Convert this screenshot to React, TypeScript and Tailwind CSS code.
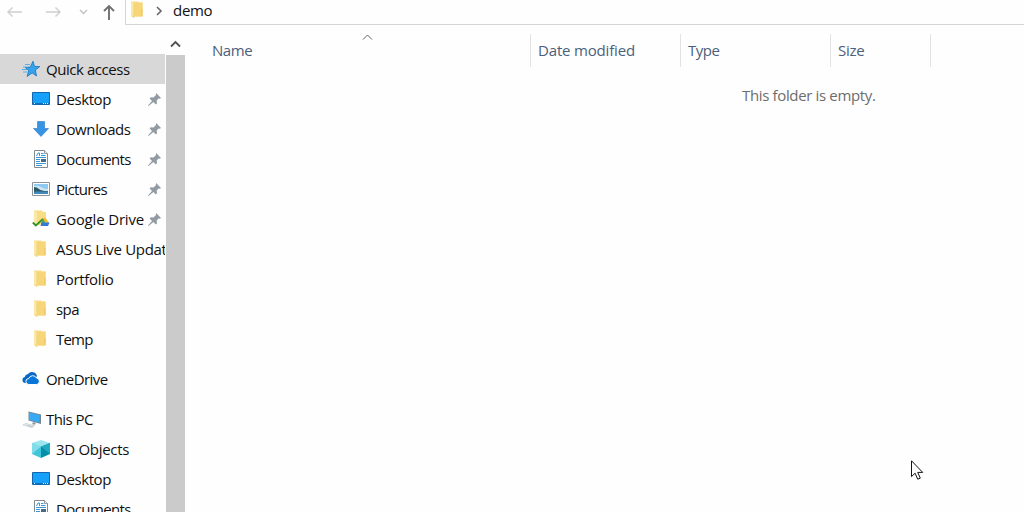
import type { ReactNode } from "react";

type Item = { label: string; icon: ReactNode; pinned?: boolean; tracking?: string };

function FolderIcon() {
  return (
    <svg width="18" height="18" viewBox="0 0 18 18">
      <path d="M2 .5h7l1 1h3.500v14H3l-1-1z" fill="#f8dc86" />
      <path d="M5.500 2l8-.5V15.500h-8z" fill="#f6d678" />
      <path d="M2 .5l3 2v14.500l-3-2z" fill="#fbe8a5" />
      <path d="M5 2.500V16.500M2.500 14.500L5 16.700" stroke="#ecca69" strokeWidth=".7" fill="none" />
      <path d="M12 8h1.500v7H12z" fill="#f0cb69" />
    </svg>
  );
}

function StarIcon() {
  return (
    <svg width="18" height="18" viewBox="0 0 18 18">
      <path d="M11 1.200l1.500 5.200 5.300.200-4.400 3.400 1.100 6-4.400-3.100-5 3.600 1.700-5.900-3.600-3.100 5.200-.5z" fill="#36a4ec" stroke="#1673bd" strokeWidth=".8" />
      <path d="M3 4.500h5M1 7h3.500M0 9.500h5M1 12h4.500" stroke="#4ea9e4" strokeWidth=".9" />
    </svg>
  );
}

function DesktopIcon() {
  return (
    <svg width="18" height="18" viewBox="0 0 18 18">
      <path d="M.5 2.500h17v12H.5z" fill="#17a0fa" stroke="#1268ad" />
      <path d="M1 13h16v1H1z" fill="#0b6fbe" />
      <path d="M2 13.500h1M11 13.500h1M13 13.500h1M15 13.500h1" stroke="#e2f4ff" />
    </svg>
  );
}

function DownloadIcon() {
  return (
    <svg width="18" height="18" viewBox="0 0 18 18">
      <path d="M5.500 1.500h7v7h4L9 16.500 1.500 8.500h4z" fill="#3793e4" stroke="#2878c4" strokeWidth=".6" />
    </svg>
  );
}

function DocumentIcon() {
  return (
    <svg width="18" height="18" viewBox="0 0 18 18">
      <path d="M2.500.5h10l3 3v14h-13z" fill="#fff" stroke="#858a8e" />
      <path d="M12.500.5v3h3" fill="#e8ebed" stroke="#858a8e" strokeWidth=".8" />
      <path d="M4.500 6L6 3h1.500v3M9 3.500h2.500M9 5.500h4.500M4 7.500h10M4 9.500h4M4 11.500h4M4 13.500h10M4 15.500h6" stroke="#3a96d4" fill="none" />
      <path d="M9 9h5v3H9z" fill="#446b87" />
    </svg>
  );
}

function PictureIcon() {
  return (
    <svg width="18" height="18" viewBox="0 0 18 18">
      <path d="M.5 2.500h17v13H.5z" fill="#fff" stroke="#8d9397" />
      <path d="M2 4h14v10H2z" fill="#8fc8f0" />
      <path d="M2 6q4-1 7 1t7 2v2H2z" fill="#c9e6f4" />
      <path d="M2 7q3 0 5 2t9 2v1H2z" fill="#2c5965" />
      <path d="M2 11.500h14V14H2z" fill="#4189b8" />
    </svg>
  );
}

function GoogleDriveIcon() {
  return (
    <svg width="18" height="18" viewBox="0 0 18 18">
      <path d="M2 .5h8l1 1.500h3v13H4l-2-1z" fill="#f8dc86" />
      <path d="M2 .5l3 2v13l-3-2z" fill="#fbe8a5" />
      <path d="M10.500 8.500l3-1L17 13h-4z" fill="#f3bd32" />
      <path d="M9 13l2.500-3.500L13 12l-2 4H9z" fill="#45a45b" />
      <path d="M10 12.500h7.500L16 16H8.500z" fill="#327bd5" />
      <path d="M.8 12.500l3 3L11 9" stroke="#36932b" strokeWidth="1.900" fill="none" />
    </svg>
  );
}

function CloudIcon() {
  return (
    <svg width="18" height="18" viewBox="0 0 18 18">
      <path d="M4.500 13H3a3 3 0 0 1-.3-5.900A4.100 4.100 0 0 1 6 4 5 5 0 0 1 15 6.500L8 10z" fill="#0868c5" />
      <path d="M7 14.500a3 3 0 0 1-.2-6 4.200 4.200 0 0 1 7.700-.5 3.300 3.300 0 0 1 .3 6.500z" fill="#0875d8" stroke="#fefefe" />
    </svg>
  );
}

function ComputerIcon() {
  return (
    <svg width="19" height="18" viewBox="0 0 19 18">
      <path d="M6.500 1.500L19 4.500V14L6.500 10.500z" fill="#6f8596" />
      <path d="M7 2.500L17.500 5v7.500L7 9.800z" fill="#36abf3" />
      <path d="M11 12l3 .7-1 2-3-.5z" fill="#929da5" />
      <path d="M0 15l4-2 9 2.500-3 2.500z" fill="#c7cdd1" />
      <path d="M2 15l3-1 6 1.800M3 16l3-1.500" stroke="#eef1f2" strokeWidth=".6" fill="none" />
    </svg>
  );
}

function CubeIcon() {
  return (
    <svg width="18" height="18" viewBox="0 0 18 18">
      <path d="M9 0l9 3-9 3.500L0 3z" fill="#9ae6f0" />
      <path d="M0 3l9 3.500V18l-9-4z" fill="#44c4d9" />
      <path d="M18 3L9 6.500V18l9-4z" fill="#078fa9" />
      <path d="M0 3l9 3.500L0 14z" fill="#80dde8" />
      <path d="M18 3L9 6.500l9 7.500z" fill="#20a9c0" />
    </svg>
  );
}

function PinIcon() {
  return (
    <svg width="13" height="13" viewBox="0 0 12 12" className="shrink-0">
      <path d="M7.500 0L12 4.500l-1.200.8-1-.2-1.800 1.900.3 2.500-1 1-2.300-2.300L.5 12 0 11.500l3.700-4.100L1.500 5l1-1.100L5 4.200l2.100-2z" fill="#929ba3" />
    </svg>
  );
}

const quickAccess: Item[] = [
  { label: "Desktop", icon: <DesktopIcon />, pinned: true, tracking: "tracking-[-0.42px]" },
  { label: "Downloads", icon: <DownloadIcon />, pinned: true, tracking: "tracking-[-0.4px]" },
  { label: "Documents", icon: <DocumentIcon />, pinned: true, tracking: "tracking-[-0.6px]" },
  { label: "Pictures", icon: <PictureIcon />, pinned: true, tracking: "tracking-[-0.65px]" },
  { label: "Google Drive", icon: <GoogleDriveIcon />, pinned: true, tracking: "tracking-[-0.15px]" },
  { label: "ASUS Live Update", icon: <FolderIcon /> },
  { label: "Portfolio", icon: <FolderIcon /> },
  { label: "spa", icon: <FolderIcon />, tracking: "tracking-[-0.6px]" },
  { label: "Temp", icon: <FolderIcon />, tracking: "tracking-[-0.8px]" },
];

const thisPc: Item[] = [
  { label: "3D Objects", icon: <CubeIcon /> },
  { label: "Desktop", icon: <DesktopIcon />, tracking: "tracking-[-0.42px]" },
  { label: "Documents", icon: <DocumentIcon />, tracking: "tracking-[-0.6px]" },
];

function GroupRow({ label, icon, selected, tracking = "tracking-[-0.55px]" }: Item & { selected?: boolean }) {
  return (
    <div className={`flex h-[30px] w-[165px] shrink-0 items-center gap-[5px] pl-[22px] ${selected ? "bg-[#d8d8d8]" : ""}`}>
      <span className="w-[19px] shrink-0">{icon}</span>
      <span className={`whitespace-nowrap ${tracking}`}>{label}</span>
    </div>
  );
}

function ItemRow({ label, icon, pinned, tracking = "tracking-[-0.3px]" }: Item) {
  return (
    <div className="flex h-[30px] w-[165px] shrink-0 items-center overflow-hidden pl-8">
      <span className="mr-1.5 w-[18px] shrink-0">{icon}</span>
      <span className={`w-[92px] shrink-0 whitespace-nowrap ${tracking}`}>{label}</span>
      {pinned && <PinIcon />}
    </div>
  );
}

function AddressBar() {
  return (
    <header className="flex h-[25px] shrink-0">
      <svg width="125" height="25" viewBox="0 0 125 25" fill="none">
        <path d="M22 12H8m4.500-4.500L8 12l4.500 4.500M46 12h14m-4.500-4.500L60 12l-4.500 4.500" stroke="#cfcfcf" strokeWidth="1.400" />
        <path d="M80 10l3.500 3.500L87 10" stroke="#c2c2c2" strokeWidth="1.400" />
        <path d="M109 20V6m-5 5l5-5 5 5" stroke="#707070" strokeWidth="1.900" />
      </svg>
      <div className="flex flex-1 items-center border-b border-l border-[#d5d5d5] pl-[3px]">
        <div className="-mt-1"><FolderIcon /></div>
        <svg width="8" height="10" viewBox="0 0 8 10" fill="none" className="-mt-[3px] ml-2">
          <path d="M2 1l4 4-4 4" stroke="#666" strokeWidth="1.600" />
        </svg>
        <span className="-mt-1 ml-2.5 tracking-[-0.3px]">demo</span>
      </div>
    </header>
  );
}

function Columns() {
  return (
    <div className="mt-[9px] flex h-[33px] items-center text-[#4c607a]">
      <div className="relative flex h-full w-[346px] items-center border-r border-[#e2e2e2] pb-0.5 pl-[27px] tracking-[-0.45px]">
        Name
        <svg width="11" height="6" viewBox="0 0 11 6" fill="none" className="absolute left-[177px] top-0">
          <path d="M1 5.500l4.500-4.500L10 5.500" stroke="#626262" />
        </svg>
      </div>
      <div className="flex h-full w-[150px] items-center border-r border-[#e2e2e2] pb-0.5 pl-[7px] tracking-[-0.17px]">Date modified</div>
      <div className="flex h-full w-[150px] items-center border-r border-[#e2e2e2] pb-0.5 pl-[7px] tracking-[-0.5px]">Type</div>
      <div className="flex h-full w-[100px] items-center border-r border-[#e2e2e2] pb-0.5 pl-[7px] tracking-[-0.3px]">Size</div>
    </div>
  );
}

export default function App() {
  return (
    <div className="relative flex h-[512px] w-[1024px] flex-col overflow-hidden bg-[#fefefe] font-['Open_Sans','Noto_Sans',sans-serif] text-[15px] leading-5 text-[#111]">
      <AddressBar />
      <div className="flex min-h-0 flex-1">
        <nav className="flex w-[166px] shrink-0 flex-col overflow-hidden pt-[29px]">
          <GroupRow label="Quick access" icon={<StarIcon />} selected tracking="tracking-[-0.45px]" />
          {quickAccess.map((item) => <ItemRow key={item.label} {...item} />)}
          <div className="h-2.5 shrink-0" />
          <GroupRow label="OneDrive" icon={<CloudIcon />} />
          <div className="h-2.5 shrink-0" />
          <GroupRow label="This PC" icon={<ComputerIcon />} />
          {thisPc.map((item) => <ItemRow key={item.label} {...item} />)}
        </nav>
        <div className="flex w-[19px] shrink-0 flex-col">
          <div className="flex h-[30px] items-center justify-center pt-2">
            <svg width="11" height="8" viewBox="0 0 11 8" fill="none">
              <path d="M1 6.500L5.500 2 10 6.500" stroke="#505050" strokeWidth="1.800" />
            </svg>
          </div>
          <div className="flex-1 bg-[#cbcbcb]" />
        </div>
        <main className="flex-1">
          <Columns />
          <p className="mt-[18px] pl-[557px] tracking-[-0.35px] text-[#6d6d6d]">This folder is empty.</p>
        </main>
      </div>
      <svg width="13" height="21" viewBox="0 0 13 21" className="absolute left-[911px] top-[460px]">
        <path d="M.5.800v15.800l3.600-3.400 2.600 6 2.600-1.100-2.600-5.700h5z" fill="#fff" stroke="#111" />
      </svg>
    </div>
  );
}
